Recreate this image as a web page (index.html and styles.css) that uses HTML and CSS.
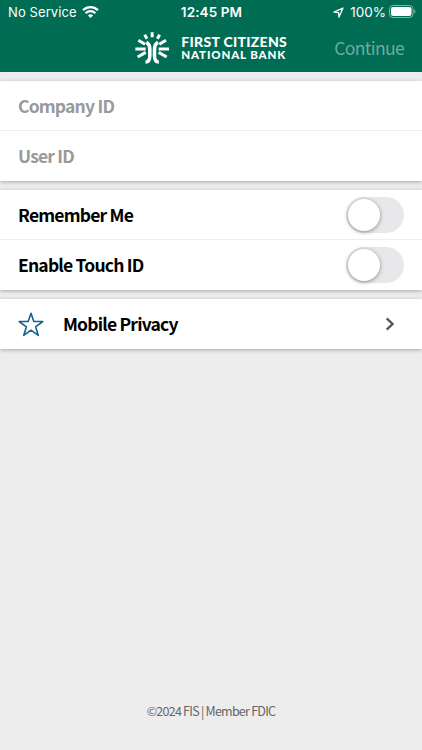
FILE: index.html
```html
<!DOCTYPE html>
<html lang="en">
<head>
<meta charset="utf-8">
<title>First Citizens National Bank</title>
<link rel="stylesheet" href="styles.css">
</head>
<body>
<header class="header">
  <div class="status">
    <div class="status-left">
      <span class="service">No Service</span>
      <svg class="wifi" viewBox="0 0 17 12" width="17" height="12" fill="none" stroke="#fff" stroke-width="2.3"><path d="M1 4.2a10.8 10.8 0 0 1 15 0M3.6 7.2a7 7 0 0 1 9.8 0"/><path d="M8.5 12 5.9 9.4a3.8 3.8 0 0 1 5.2 0z" fill="#fff" stroke="none"/></svg>
    </div>
    <span class="time">12:45 PM</span>
    <div class="status-right">
      <svg class="location" viewBox="0 0 11 11" width="11" height="11" fill="none" stroke="#fff" stroke-width="1.3" stroke-linejoin="round"><path d="M10 1 1 5.2l4.5.4.5 4.5z"/></svg>
      <span class="percent">100%</span>
      <svg class="battery" viewBox="0 0 27 13" width="27" height="13"><rect x=".5" y=".5" width="23.5" height="12" rx="3.6" fill="none" stroke="#fff" stroke-opacity=".5"/><rect x="2" y="2" width="20.5" height="9" rx="2.3" fill="#fff"/><path d="M25.2 4.3c1.7.8 1.7 3.6 0 4.4z" fill="#fff" fill-opacity=".5"/></svg>
    </div>
  </div>
  <div class="nav">
    <div class="brand">
      <svg class="logo" viewBox="13 15 102 96" width="34" height="32" fill="none" stroke="#fff" stroke-width="9"><path d="M64.5 16v15M42 23l7 12M87 23l-7 12M23 40l20 12M106 40L86 52M14 66h31M84 66h31M21 90l24-14M108 90L84 76"/><path d="M47 46c7 4 10.500 10 10.500 19v22c0 12-3 18-13 18M82 46c-7 4-10.500 10-10.500 19v22c0 12 3 18 13 18" stroke-width="10.500"/></svg>
      <div class="brand-name"><span class="name-top">FIRST CITIZENS</span><span class="name-bottom">NATIONAL BANK</span></div>
    </div>
    <span class="continue">Continue</span>
  </div>
</header>
<main class="content">
  <section class="card">
    <div class="row field"><span class="label">Company ID</span></div>
    <div class="row field"><span class="label">User ID</span></div>
  </section>
  <section class="card">
    <div class="row"><span class="label">Remember Me</span><span class="toggle"></span></div>
    <div class="row"><span class="label">Enable Touch ID</span><span class="toggle"></span></div>
  </section>
  <section class="card">
    <div class="row link">
      <svg class="star" viewBox="0 0 26 25" width="26" height="25" fill="none" stroke="#17618c" stroke-width="1.6" stroke-linejoin="round"><path d="M13 1.200l2.800 8.300h9l-7.200 5.300 2.700 8.600L13 18.200l-7.300 5.200 2.700-8.600-7.200-5.300h9z"/></svg>
      <span class="label">Mobile Privacy</span>
      <svg class="chevron" viewBox="0 0 10 14" width="10" height="14" fill="none" stroke="#555" stroke-width="2.300"><path d="M1.700 1.300 7.600 7l-5.900 5.700"/></svg>
    </div>
  </section>
</main>
<footer class="footer">©2024 FIS | Member FDIC</footer>
</body>
</html>
```
FILE: styles.css
```css
* { box-sizing: border-box; }
body {
  margin: 0;
  height: 750px;
  display: flex;
  flex-direction: column;
  overflow: hidden;
  background: #ededed;
  color: #000;
  font-family: "Noto Sans CJK SC", "Noto Sans", sans-serif;
}
span { white-space: nowrap; }
.header { height: 72px; background: #006c53; color: #fff; flex: none; }
.status {
  height: 24px;
  padding: 0 6px 0 8px;
  display: grid;
  grid-template-columns: 1fr auto 1fr;
  align-items: center;
  font: 13.5px/24px Inter, sans-serif;
}
.status-left, .status-right { display: flex; align-items: center; height: 23px; }
.status-right { justify-content: flex-end; }
.service { font-size: 13px; letter-spacing: .1px; }
.wifi { margin-left: 5px; }
.time { font-size: 13.5px; font-weight: 600; letter-spacing: .1px; padding-right: 1px; }
.location { margin-right: 6px; }
.percent { margin-right: 3px; }
.battery { margin-bottom: 1px; }
.nav {
  height: 48px;
  padding: 0 18px;
  display: grid;
  grid-template-columns: 1fr auto 1fr;
  align-items: center;
}
.brand { grid-column: 2; display: flex; align-items: center; gap: 12px; }
.logo { margin-bottom: 1px; }
.brand-name {
  display: flex;
  flex-direction: column;
  font-family: Lato, sans-serif;
  font-weight: 900;
}
.name-top { font-size: 14px; line-height: 13px; letter-spacing: .3px; margin-right: -.3px; }
.name-bottom { font-size: 11.5px; line-height: 13px; letter-spacing: .85px; margin-right: -.85px; }
.continue {
  justify-self: end;
  padding-bottom: 1px;
  font-size: 17.5px;
  line-height: 24px;
  letter-spacing: -.65px;
  color: #72aa9b;
}
.content { display: flex; flex-direction: column; gap: 9px; padding-top: 9px; }
.card { background: #fff; box-shadow: 0 1px 4px rgba(0, 0, 0, .3); }
.row {
  height: 50px;
  padding: 0 18px;
  display: flex;
  align-items: center;
  font-size: 17.5px;
  font-weight: 700;
  letter-spacing: -.81px;
}
.row:not(:last-child) { border-bottom: 1px solid #eee; }
.label { padding-bottom: 1px; }
.field { color: #999; }
.toggle {
  width: 58px;
  height: 36px;
  margin-left: auto;
  border-radius: 18px;
  background: #e8e8ea;
  display: flex;
  align-items: center;
  padding-left: 2px;
}
.toggle::before {
  content: "";
  width: 32px;
  height: 32px;
  border-radius: 50%;
  background: #fff;
  box-shadow: 0 1px 4px rgba(0, 0, 0, .4);
}
.star { margin-right: 19px; }
.chevron { margin-left: auto; margin-right: 9px; }
.footer {
  margin-top: auto;
  height: 77px;
  text-align: center;
  font-size: 12.5px;
  line-height: 76px;
  letter-spacing: -.76px;
  color: #666;
}
```
